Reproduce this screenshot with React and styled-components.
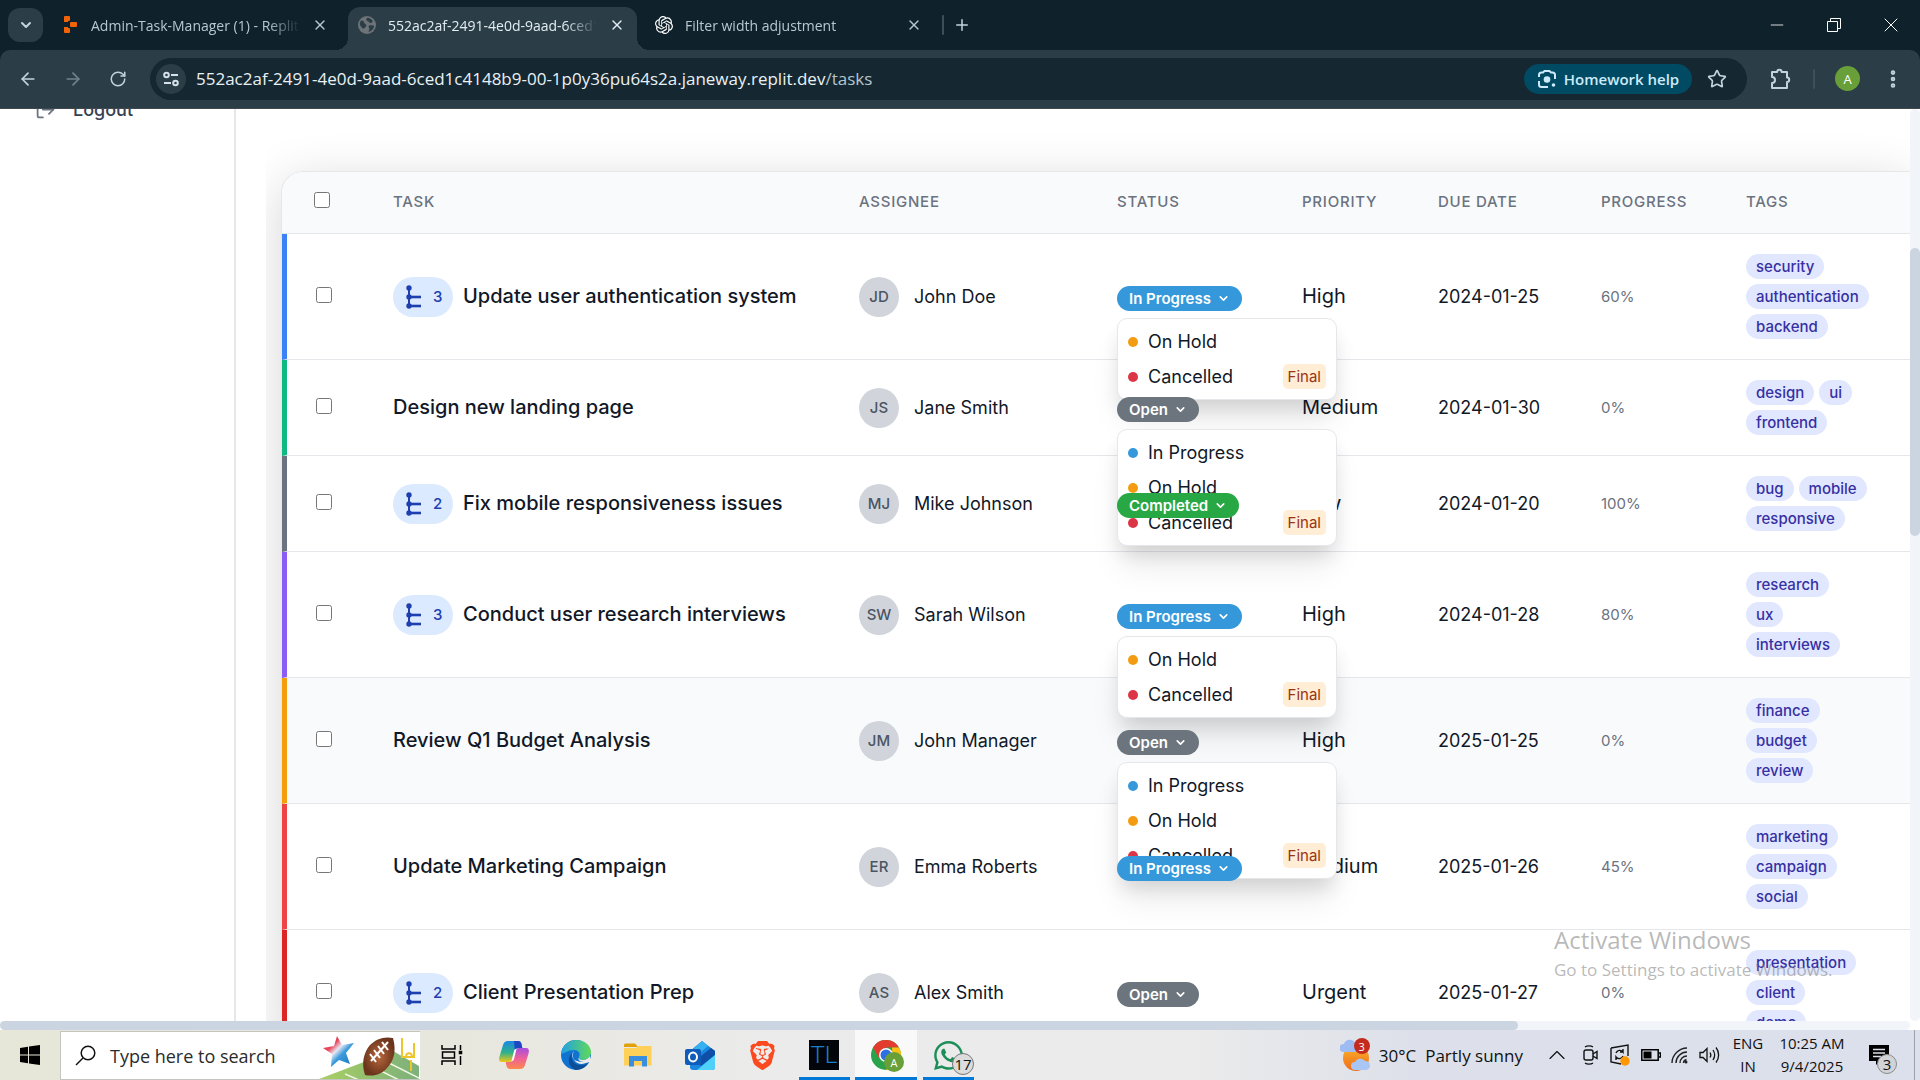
import React from "react";
import styled, { createGlobalStyle } from "styled-components";
import {
  ArrowLeft, ArrowRight, RotateCw, X, Plus, ChevronDown, ChevronUp, LogOut,
  Star, EllipsisVertical, Minus,
} from "lucide-react";
import { SiOpenai, SiBrave } from "react-icons/si";
import { FaWhatsapp } from "react-icons/fa";

const GlobalStyle = createGlobalStyle`
  *, *::before, *::after { box-sizing: border-box; }
  html, body, #root { height: 100%; }
  body { margin: 0; overflow: hidden; font-family: Inter, sans-serif; color: #111827; }
  button { font: inherit; color: inherit; border: 0; padding: 0; background: none; }
  svg { display: block; flex: none; }
`;

const Screen = styled.div`
  display: flex;
  flex-direction: column;
  height: 100vh;
  position: relative;
`;

/* ---------- browser ---------- */
const TabStrip = styled.header`
  display: flex;
  align-items: flex-start;
  height: 50px;
  padding-left: 8px;
  background: #0f222b;
  font-family: "Open Sans", sans-serif;
  color: #c3d3dc;
`;
const TabSearch = styled.button`
  display: grid;
  place-items: center;
  width: 35px;
  height: 34px;
  margin: 8px 8px 0 0;
  border-radius: 12px;
  background: #2b3e47;
`;
const Tab = styled.div`
  position: relative;
  display: flex;
  align-items: center;
  gap: 12px;
  width: 289px;
  height: 43px;
  margin: 7px 8px 0 0;
  padding: 0 12px 7px 10px;
  border-radius: 12px 12px 0 0;
  font-size: 14px;
  color: ${(p) => (p.$active ? "#e3edf2" : "#b6c8d2")};
  background: ${(p) => (p.$active ? "#2b3e47" : "transparent")};
  ${(p) => p.$active && `
    &::before, &::after {
      content: ""; position: absolute; bottom: 0; width: 12px; height: 12px;
    }
    &::before { left: -12px; background: radial-gradient(circle at 0 0, transparent 12px, #2b3e47 12px); }
    &::after { right: -12px; background: radial-gradient(circle at 100% 0, transparent 12px, #2b3e47 12px); }
  `}
`;
const TabTitle = styled.span`
  flex: 1;
  min-width: 0;
  overflow: hidden;
  white-space: nowrap;
  mask-image: linear-gradient(to right, #000 calc(100% - 32px), transparent);
`;
const Plain = styled.button`
  display: grid;
  place-items: center;
  width: ${(p) => p.$w || 16}px;
  height: ${(p) => p.$h || 24}px;
  flex: none;
  color: ${(p) => p.$c || "inherit"};
`;
const StripEnd = styled.div`
  display: flex;
  align-items: center;
  gap: 9px;
  height: 50px;
`;
const Divider = styled.span`
  width: 2px;
  height: 20px;
  border-radius: 1px;
  background: #3b505b;
`;
const WindowButtons = styled.div`
  display: flex;
  align-items: center;
  height: 50px;
  margin-left: auto;
  color: #fff;
`;
const ToolbarBack = styled.div`
  background: #0f222b;
`;
const Toolbar = styled.div`
  display: flex;
  align-items: center;
  height: 59px;
  padding: 0 14px 1px 11px;
  border-radius: 10px 10px 0 0;
  border-bottom: 1px solid #41494f;
  background: #2b3e47;
  color: #c3d3dc;
  font-family: "Open Sans", sans-serif;
`;
const NavButtons = styled.nav`
  display: flex;
  gap: 11px;
  margin-right: 15px;
`;
const AddressBar = styled.div`
  display: flex;
  flex: 1;
  align-items: center;
  height: 42px;
  padding: 0 20px 0 6px;
  border-radius: 21px;
  background: #152831;
`;
const SiteInfo = styled.button`
  display: grid;
  place-items: center;
  width: 30px;
  height: 30px;
  border-radius: 15px;
  background: #2b3e47;
  color: #d5e2e9;
`;
const Url = styled.span`
  flex: 1;
  margin-left: 10px;
  white-space: nowrap;
  font-family: "Open Sans", sans-serif;
  font-size: 17px;
  color: #eaf1f5;
  span { color: #b4c5ce; }
`;
const LensButton = styled.button`
  display: flex;
  align-items: center;
  justify-content: center;
  gap: 7px;
  width: 168px;
  height: 30px;
  margin-right: 15px;
  border-radius: 15px;
  background: #004a63;
  color: #cdeafa;
  font-size: 15px;
  font-weight: 600;
`;
const ToolbarEnd = styled.div`
  display: flex;
  align-items: center;
  margin-left: 20px;
  gap: 20px;
`;
const Profile = styled.button`
  width: 25px;
  height: 25px;
  border-radius: 50%;
  background: #689f38;
  color: #fff;
  font-size: 13px;
`;

/* ---------- page viewport ---------- */
const Viewport = styled.div`
  flex: 1;
  min-height: 0;
  display: grid;
  grid-template-columns: minmax(0, 1fr) 10px;
  grid-template-rows: minmax(0, 1fr) 9px;
  background: #fff;
`;
const Page = styled.div`
  display: grid;
  grid-template-columns: 236px minmax(0, 1fr);
  overflow: hidden;
`;
const VTrack = styled.div`
  padding-top: 139px;
  border-radius: 5px;
  background: #f1f5f9;
`;
const VThumb = styled.div`
  height: 288px;
  border-radius: 5px;
  background: #cbd5e1;
`;
const HTrack = styled.div`
  border-radius: 5px;
  background: #f1f5f9;
`;
const HThumb = styled.div`
  width: 79.5%;
  height: 9px;
  border-radius: 5px;
  background: #cbd5e1;
`;
const Sidebar = styled.aside`
  border-right: 2px solid #e5e7eb;
  overflow: hidden;
`;
const SideLink = styled.a`
  display: flex;
  align-items: center;
  gap: 17px;
  margin-top: -12px;
  padding-left: 35px;
  height: 25px;
  font-size: 18px;
  line-height: 25px;
  font-weight: 500;
  color: #374151;
  text-decoration: none;
  svg { color: #6b7280; }
`;
const Main = styled.main`
  margin-left: 30px;
  padding: 62px 0 0 15px;
  overflow: hidden;
`;
const Card = styled.section`
  border: 1px solid #e5e7eb;
  border-right: 0;
  border-radius: 22px 0 0 0;
  background: #fff;
  box-shadow: 0 10px 50px rgba(0, 0, 0, 0.16);
`;
const Table = styled.table`
  width: 100%;
  table-layout: fixed;
  border-collapse: separate;
  border-spacing: 0;
`;
const Th = styled.th`
  height: 62px;
  padding: 0 0 2px 30px;
  text-align: left;
  font-size: 15px;
  line-height: 20px;
  font-weight: 500;
  letter-spacing: 0.05em;
  color: #6b7280;
  background: #f9fafc;
  border-bottom: 1px solid #e5e7eb;
  &:first-child { border-radius: 21px 0 0 0; padding-left: 32px; }
`;
const Row = styled.tr`
  background: ${(p) => (p.$hover ? "#f9fafc" : "#fff")};
`;
const Td = styled.td`
  padding: 20px 0 20px 30px;
  vertical-align: middle;
  border-bottom: 1px solid #e5e7eb;
  font-size: ${(p) => p.$size || 18}px;
  line-height: 25px;
  color: ${(p) => p.$c || "#111827"};
  white-space: nowrap;
`;
const CheckTd = styled(Td)`
  padding-left: 29px;
  border-left: 5px solid ${(p) => p.$bar};
`;
const Check = styled.input`
  display: block;
  width: 16px;
  height: 16px;
  margin: 0 0 3px;
`;
const TaskCell = styled.div`
  display: flex;
  align-items: center;
  gap: 10px;
  font-size: 20px;
  font-weight: 500;
`;
const SubtaskPill = styled.button`
  display: flex;
  align-items: center;
  gap: 12px;
  width: 60px;
  height: 40px;
  padding-left: 12px;
  border-radius: 20px;
  background: #dbeafe;
  color: #1e40af;
  font-size: 15px;
`;
const Person = styled.div`
  display: flex;
  align-items: center;
  gap: 15px;
`;
const Avatar = styled.span`
  display: grid;
  place-items: center;
  width: 40px;
  height: 40px;
  border-radius: 50%;
  background: #d1d5db;
  color: #4b5563;
  font-size: 15px;
  font-weight: 500;
`;
const StatusWrap = styled.div`
  position: relative;
  width: max-content;
  padding-top: 4px;
`;
const Badge = styled.button`
  display: flex;
  align-items: center;
  gap: 6px;
  height: 25px;
  padding: 0 12px;
  border-radius: 13px;
  background: ${(p) => p.$bg};
  color: #fff;
  font-size: 15px;
  line-height: 25px;
  font-weight: 600;
`;
const Menu = styled.div`
  position: absolute;
  top: calc(100% + 7px);
  left: 0;
  width: 220px;
  padding: 5px 0;
  border: 1px solid #e5e7eb;
  border-radius: 10px;
  background: #fff;
  box-shadow: 0 12px 19px -4px rgba(0, 0, 0, 0.12), 0 25px 32px -4px rgba(0, 0, 0, 0.08);
`;
const MenuItem = styled.button`
  display: flex;
  align-items: center;
  gap: 10px;
  width: 100%;
  height: 35px;
  padding: 0 10px;
  font-size: 18px;
  text-align: left;
  color: #111827;
`;
const Dot = styled.span`
  width: 10px;
  height: 10px;
  border-radius: 50%;
  background: ${(p) => p.$c};
`;
const Final = styled.span`
  margin-left: auto;
  padding: 0 5px;
  border-radius: 5px;
  background: #ffedd5;
  color: #9a3412;
  font-size: 15px;
  line-height: 25px;
`;
const Tags = styled.div`
  display: flex;
  flex-wrap: wrap;
  gap: 5px;
  width: 124px;
`;
const Tag = styled.span`
  padding: 0 10px;
  border-radius: 13px;
  background: #e0e7ff;
  color: #3730a3;
  font-size: 15px;
  line-height: 25px;
  font-weight: 500;
`;

/* ---------- desktop ---------- */
const Watermark = styled.div`
  position: absolute;
  right: 83px;
  bottom: 96px;
  width: 283px;
  font-family: "Open Sans", sans-serif;
  color: rgba(125, 125, 125, 0.55);
  white-space: nowrap;
  pointer-events: none;
  p { margin: 0; font-size: 24px; line-height: 32px; }
  p + p { font-size: 17px; line-height: 28px; }
`;
const Taskbar = styled.footer`
  display: flex;
  align-items: stretch;
  height: 50px;
  background: linear-gradient(to right, #e6e7d8 0, #e8e7de 24%, #ebebeb 40%, #ebebeb 62%, #dde0ea 74%, #dbe0ec 100%);
  font-family: "Open Sans", sans-serif;
  color: #111;
`;
const StartButton = styled.button`
  display: grid;
  place-items: center;
  width: 60px;
`;
const SearchBox = styled.label`
  display: flex;
  align-items: center;
  width: 360px;
  margin-top: 1px;
  padding-left: 14px;
  border: 1px solid #c4c4c0;
  border-right: 0;
  background: #fff;
  input {
    width: 209px;
    margin-left: 14px;
    padding: 0;
    border: 0;
    outline: 0;
    font: 18px "Open Sans", sans-serif;
    background: none;
  }
  input::placeholder { color: #2b2b2b; opacity: 1; }
`;
const Apps = styled.div`
  display: flex;
  align-items: stretch;
  margin-left: 1px;
`;
const TaskButton = styled.button`
  display: grid;
  place-items: center;
  width: 62px;
  position: relative;
  background: ${(p) => (p.$active ? "#f9f9f9" : "transparent")};
  &::after {
    content: "";
    position: absolute;
    bottom: 0;
    left: ${(p) => (p.$active ? 0 : 6)}px;
    right: ${(p) => (p.$active ? 0 : 5)}px;
    height: 3px;
    background: ${(p) => (p.$open ? "#0078d7" : "transparent")};
  }
`;
const TlTile = styled.span`
  display: grid;
  place-items: center;
  width: 30px;
  height: 30px;
  background: #02060a;
  color: #1b7fd0;
  font-family: Roboto, sans-serif;
  font-weight: 300;
  font-size: 24px;
  line-height: 30px;
`;
const CountBadge = styled.span`
  position: absolute;
  left: ${(p) => p.$x}px;
  top: ${(p) => p.$y}px;
  display: grid;
  place-items: center;
  width: ${(p) => p.$s}px;
  height: ${(p) => p.$s}px;
  border: ${(p) => (p.$line ? `1px solid ${p.$line}` : 0)};
  border-radius: 50%;
  background: ${(p) => p.$bg};
  color: ${(p) => p.$c || "#111"};
  font-size: ${(p) => p.$f || 15}px;
  line-height: 1;
`;
const Tray = styled.div`
  display: flex;
  align-items: center;
  margin-left: auto;
`;
const Weather = styled.button`
  display: flex;
  align-items: center;
  gap: 9px;
  margin-right: 20px;
  font-size: 17px;
`;
const IconSlot = styled.span`
  position: relative;
  display: inline-grid;
`;
const TrayIcons = styled.div`
  display: flex;
  align-items: center;
  gap: 10px;
  margin-right: 8px;
`;
const Stacked = styled.div`
  width: ${(p) => p.$w}px;
  text-align: center;
  font-size: 15px;
  line-height: 23px;
  white-space: nowrap;
`;
const Notice = styled.button`
  position: relative;
  width: 26px;
  height: 26px;
  margin: 0 19px 0 13px;
`;
const ShowDesktop = styled.button`
  width: 6px;
  align-self: stretch;
  border-left: 1px solid #9da1a8;
`;

/* ---------- data ---------- */
const statusColor = {
  "In Progress": "#3498db",
  Open: "#6c757d",
  Completed: "#28a745",
  "On Hold": "#f39c12",
  Cancelled: "#dc3545",
};
const tasks = [
  { bar: "#3b82f6", subs: 3, title: "Update user authentication system", who: "John Doe", ini: "JD", status: "In Progress", next: ["On Hold", "Cancelled"], priority: "High", due: "2024-01-25", progress: "60%", tags: ["security", "authentication", "backend"] },
  { bar: "#10b981", title: "Design new landing page", who: "Jane Smith", ini: "JS", status: "Open", next: ["In Progress", "On Hold", "Cancelled"], priority: "Medium", due: "2024-01-30", progress: "0%", tags: ["design", "ui", "frontend"] },
  { bar: "#6b7280", subs: 2, title: "Fix mobile responsiveness issues", who: "Mike Johnson", ini: "MJ", status: "Completed", priority: "Low", due: "2024-01-20", progress: "100%", tags: ["bug", "mobile", "responsive"] },
  { bar: "#8b5cf6", subs: 3, title: "Conduct user research interviews", who: "Sarah Wilson", ini: "SW", status: "In Progress", next: ["On Hold", "Cancelled"], priority: "High", due: "2024-01-28", progress: "80%", tags: ["research", "ux", "interviews"] },
  { bar: "#f59e0b", hover: true, title: "Review Q1 Budget Analysis", who: "John Manager", ini: "JM", status: "Open", next: ["In Progress", "On Hold", "Cancelled"], priority: "High", due: "2025-01-25", progress: "0%", tags: ["finance", "budget", "review"] },
  { bar: "#ef4444", title: "Update Marketing Campaign", who: "Emma Roberts", ini: "ER", status: "In Progress", priority: "Medium", due: "2025-01-26", progress: "45%", tags: ["marketing", "campaign", "social"] },
  { bar: "#dc2626", subs: 2, title: "Client Presentation Prep", who: "Alex Smith", ini: "AS", status: "Open", priority: "Urgent", due: "2025-01-27", progress: "0%", tags: ["presentation", "client", "demo"] },
];

/* ---------- drawings ---------- */
const ReplitIcon = () => (
  <svg width="18" height="18" viewBox="0 0 18 18" fill="#f26207">
    <rect x="3" y="0" width="6" height="5" rx="1" />
    <rect x="9" y="6" width="7" height="5" rx="1" />
    <rect x="3" y="12" width="6" height="5" rx="1" />
    <rect x="3" y="4" width="4" height="2" /><rect x="3" y="11" width="4" height="2" />
  </svg>
);
const GlobeIcon = () => (
  <svg width="18" height="18" viewBox="0 0 18 18">
    <circle cx="9" cy="9" r="9" fill="#6d7377" />
    <path d="M3 4.500c2-.2 3 .6 3 2s2.400 1.200 2.400 3-2 1.500-2.400 3.500C3.500 12 1.600 9.500 1.800 7zM9 1.800c2.500 0 5 1.500 6 3.600-1.400.2-1 1.600-2.600 1.600S11 5 9.500 5 8.200 3 9 1.800zM11 9.500c2-.4 4.500 0 5.200.6-.6 3-3 5.500-5.700 6 .3-1.600 1-2 .8-3.500s-1.300-2-.3-3.100z" fill="#2b3e47" />
  </svg>
);
const TuneIcon = () => (
  <svg width="18" height="18" viewBox="0 0 18 18" fill="none" stroke="currentColor" strokeWidth="2">
    <circle cx="4.500" cy="5" r="2.300" /><path d="M9 5h7M2 13h7" /><circle cx="13.500" cy="13" r="2.300" />
  </svg>
);
const LensIcon = () => (
  <svg width="20" height="20" viewBox="0 0 20 20" fill="none" stroke="currentColor" strokeWidth="2">
    <path d="M2 8V6a2.500 2.500 0 0 1 2.500-2.500H6L7.500 2h5L14 3.500h1.500A2.500 2.500 0 0 1 18 6v4M2 12v3.500A2.500 2.500 0 0 0 4.500 18H11" />
    <circle cx="10" cy="10.500" r="3.300" fill="currentColor" stroke="none" />
    <circle cx="16.500" cy="16" r="1.800" fill="currentColor" stroke="none" />
  </svg>
);
const PuzzleIcon = () => (
  <svg width="24" height="24" viewBox="0 0 24 24" fill="none" stroke="currentColor" strokeWidth="2" strokeLinejoin="round">
    <path d="M4 5h5.200a2.200 2.200 0 0 1 4.400 0H19v5.500a2.200 2.200 0 0 1 0 4.400V21H4v-5a3 3 0 0 0 0-6z" />
  </svg>
);
const RestoreIcon = () => (
  <svg width="14" height="14" viewBox="0 0 14 14" fill="none" stroke="currentColor">
    <path d="M.5 3.500h10v10H.5zM3.500 3V.5h10v10H11" />
  </svg>
);
const TreeIcon = () => (
  <svg width="16" height="24" viewBox="0 0 16 24" fill="#1e40af">
    <circle cx="4" cy="3" r="2.700" /><circle cx="4" cy="12" r="2.700" /><circle cx="4" cy="21" r="2.700" />
    <rect x="3" y="3" width="2" height="18" /><rect x="4" y="10.700" width="12" height="2.600" /><rect x="4" y="19.700" width="12" height="2.600" />
  </svg>
);
const WindowsIcon = () => (
  <svg width="20" height="20" viewBox="0 0 20 20" fill="#000">
    <path d="M0 3l8-1.200v7.700H0zM9 1.600L20 0v9.500H9zM0 10.500h8v7.700L0 17zM9 10.500h11V20L9 18.400z" />
  </svg>
);
const SearchIcon = () => (
  <svg width="21" height="21" viewBox="0 0 21 21" fill="none" stroke="#111" strokeWidth="1.500">
    <circle cx="13" cy="8" r="6.800" /><path d="M8 13l-7 7" />
  </svg>
);
const FootballArt = () => (
  <svg width="100" height="47" viewBox="0 0 100 47">
    <defs>
      <linearGradient id="field" x1="0" x2="1"><stop offset="0" stopColor="#a9cf62" /><stop offset="1" stopColor="#7db07c" /></linearGradient>
      <linearGradient id="star" x1="0" y1="0" x2="1" y2="1"><stop offset=".3" stopColor="#e84457" /><stop offset=".45" stopColor="#e8e6f4" /><stop offset=".6" stopColor="#3a9bdc" /><stop offset="1" stopColor="#1b6fb8" /></linearGradient>
      <radialGradient id="ball"><stop offset="0" stopColor="#b9683c" /><stop offset="1" stopColor="#6b351d" /></radialGradient>
    </defs>
    <path d="M0 47L74 19l26 15v13z" fill="url(#field)" />
    <path d="M26 42l14 6M56 36l24 12M66 29l34 17" stroke="#eef6e2" strokeWidth="1.500" />
    <path d="M18 4l5 9 12-2-8 10 4 11-11-4-8 7 1-13L4 16l11-2z" fill="url(#star)" />
    <path d="M74 6c4 14 0 24-6 30-5 6-13 9-22 7-4-12-1-23 5-30 6-6 14-9 23-7z" fill="url(#ball)" />
    <path d="M52 29L69 10M51 22l6 8M55 18l6 8M59 14l6 8M63 10l6 8" stroke="#fff" strokeWidth="2" />
    <path d="M83 6v19h12V11M92 39V28M87 25c0-5 6-5 6 0" stroke="#edc62c" strokeWidth="2" fill="none" />
  </svg>
);
const TaskViewIcon = () => (
  <svg width="22" height="20" viewBox="0 0 22 20" fill="none" stroke="#000" strokeWidth="1.500">
    <path d="M1 0v4h13V0M1 20v-4h13v4M1.500 7h12v6h-12zM19.500 0v5M19.500 11v9" /><rect x="18.500" y="6.500" width="2" height="2" fill="#000" />
  </svg>
);
const CopilotIcon = () => (
  <svg width="30" height="28" viewBox="0 0 30 28">
    <defs>
      <linearGradient id="cpA" x1="0" y1="0" x2="0" y2="1"><stop offset="0" stopColor="#1a86e8" /><stop offset=".55" stopColor="#2fb18b" /><stop offset="1" stopColor="#f3c614" /></linearGradient>
      <linearGradient id="cpB" x1="0" y1="0" x2="0" y2="1"><stop offset="0" stopColor="#a64ee0" /><stop offset=".5" stopColor="#f0609a" /><stop offset="1" stopColor="#fb8a4a" /></linearGradient>
    </defs>
    <path d="M9 0h10c2 0 3 1 3.500 3l.8 4h-4c-2 0-3 1-3.500 3l-2 8c-.7 2-1.600 3-4 3H3C0 21-.3 18.500.5 15.500L4 4c.8-2.500 2.300-4 5-4z" fill="url(#cpA)" />
    <path d="M15 0h4c2 0 3 1 3.500 3l.8 4h-4c-2 0-3 1-3.500 3z" fill="#1e47c4" />
    <path d="M21 28H11c-2 0-3-1-3.500-3l-.8-4h4c2 0 3-1 3.500-3l2-8c.7-2 1.600-3 4-3H27c3 0 3.300 2.500 2.500 5.500L26 24c-.8 2.500-2.300 4-5 4z" fill="url(#cpB)" />
    <path d="M12.500 20L15 10c.4-1.500 1-2 2.500-2L15 18c-.4 1.500-1 2-2.500 2z" fill="#fff" />
  </svg>
);
const EdgeIcon = () => (
  <svg width="30" height="30" viewBox="0 0 30 30">
    <defs>
      <linearGradient id="edA" x1="0" x2="1"><stop offset="0" stopColor="#229fe6" /><stop offset="1" stopColor="#5fd95a" /></linearGradient>
    </defs>
    <circle cx="15" cy="15" r="15" fill="#1173d0" />
    <path d="M0 14C1 5 8 0 15 0c9 0 15 6 15 12 0 5-4 8-8 8-3 0-5-1-4-3 2-4-1-7-5-7-6 0-9 3-13 4z" fill="url(#edA)" />
    <path d="M11 13c-2 7 3 13 10 12 3 0 5-1 7-3-3 5-8 8-13 8-7-2-10-11-4-17z" fill="#0c4f98" />
    <path d="M13 11c-3 3-2 9 3 10 5 2 9 1 13-2l1 0-1 3-8 2c-8 0-11-8-8-13z" fill="#ebebeb" />
    <path d="M18 17c-1 2 1 3 4 3 3 0 6-2 7-4l1 4-5 2c-5 0-9-1-7-5z" fill="#ebebeb" />
  </svg>
);
const ExplorerIcon = () => (
  <svg width="28" height="24" viewBox="0 0 28 24">
    <path d="M0 2a1.500 1.500 0 0 1 1.500-1.500H11L14 4H0z" fill="#e0a10a" />
    <path d="M0 5h12l2-2h13.500v19.500H0z" fill="#ffd058" />
    <path d="M5 23.500V13h18v10.500h-5V18h-8v5.500z" fill="#3b8ede" />
  </svg>
);
const OutlookIcon = () => (
  <svg width="30" height="30" viewBox="0 0 30 30">
    <path d="M5 11L17 1l13 10v16a3 3 0 0 1-3 3H8a3 3 0 0 1-3-3z" fill="#1b86de" />
    <path d="M5 12L17 1l6 5L9 18z" fill="#35b0f0" /><path d="M11 20L26 8l4 3v4L16 26z" fill="#0f4fa8" />
    <path d="M12 30L30 15v12a3 3 0 0 1-3 3z" fill="#4fd0fb" />
    <rect x="0" y="9" width="16" height="16" rx="2" fill="#0f5cba" />
    <ellipse cx="8" cy="17" rx="4" ry="4.500" fill="none" stroke="#fff" strokeWidth="2" />
  </svg>
);
const ChromeIcon = () => (
  <svg width="30" height="30" viewBox="0 0 30 30">
    <circle cx="15" cy="15" r="15" fill="#2ba24c" />
    <path d="M15 15L2 7.500A15 15 0 0 1 28 7.500H15z" fill="#e33b2e" />
    <path d="M28 7.500A15 15 0 0 1 15 30l6.500-11.300L21 7.500z" fill="#fbc116" />
    <path d="M2 7.500L8.500 18.700 15 8z" fill="#e33b2e" />
    <circle cx="15" cy="15" r="7" fill="#fff" /><circle cx="15" cy="15" r="5.500" fill="#2f6fe4" />
  </svg>
);
const WeatherIcon = () => (
  <svg width="30" height="34" viewBox="0 0 30 34">
    <defs><linearGradient id="sun" x1="0" y1="0" x2="0" y2="1"><stop offset="0" stopColor="#fbb32c" /><stop offset="1" stopColor="#ef6c1a" /></linearGradient></defs>
    <circle cx="16" cy="20" r="13" fill="url(#sun)" />
    <path d="M3 14a4 4 0 0 1 1-8 6 6 0 0 1 11-1 4.500 4.500 0 0 1 2 9z" fill="#9dbdf2" />
    <path d="M15 32a4 4 0 0 1 0-8 6 6 0 0 1 10-1 4.500 4.500 0 0 1 1 9z" fill="#a9c6f4" />
  </svg>
);
const MeetIcon = () => (
  <svg width="18" height="20" viewBox="0 0 18 20" fill="none" stroke="#111" strokeWidth="1.400">
    <rect x="3" y="5" width="9" height="10" rx="2" /><path d="M12 9l4-2.500v7L12 11M4 2c2-1.500 6-1.500 8 0M4 18c2 1.500 6 1.500 8 0" />
  </svg>
);
const UpdateIcon = () => (
  <svg width="22" height="22" viewBox="0 0 22 22" fill="none" stroke="#111" strokeWidth="1.400">
    <path d="M2 4l17-3v11M2 4v14l10 2M7 9a4 4 0 0 1 7-1V5M14 8h-3M14 12a4 4 0 0 1-7 1v3" />
    <circle cx="16" cy="17" r="4.700" fill="#ff9800" stroke="none" />
  </svg>
);
const BatteryIcon = () => (
  <svg width="20" height="12" viewBox="0 0 20 12"><path d="M.8.800h16.400v10.400H.8zM18 4h1.500v4H18" fill="none" stroke="#000" strokeWidth="1.500" /><path d="M2.500 2.500h8v7h-8z" /></svg>
);
const WifiIcon = () => (
  <svg width="18" height="17" viewBox="0 0 18 17" fill="none" stroke="#222" strokeWidth="1.400">
    <path d="M1 16C1 8 8 1 16 1M5 16C5 10 10 5 16 5M9 16c0-4 3-7 7-7M12.500 16c0-2 1.500-3 3-3.500" /><circle cx="15" cy="15" r="1.500" fill="#222" stroke="none" />
  </svg>
);
const SoundIcon = () => (
  <svg width="21" height="18" viewBox="0 0 21 18" fill="none" stroke="#111" strokeWidth="1.300">
    <path d="M1 6.500h3l4-4v13l-4-4H1zM11 6.500c1 1.500 1 3.500 0 5M14 4c2 3 2 7 0 10M17 1.500c3.500 4.500 3.500 10.500 0 15" />
  </svg>
);
const NoticeIcon = () => (
  <svg width="21" height="21" viewBox="0 0 21 21"><path d="M0 0h20v16h-9l-4 4v-4H0z" /><path d="M4 4.500h12M4 8h12M4 11.500h8" stroke="#dbe0ec" strokeWidth="1.300" /></svg>
);

function BrowserTab({ icon, title, active }) {
  return (
    <Tab $active={active}>
      {icon}
      <TabTitle>{title}</TabTitle>
      <Plain aria-label="Close tab"><X size={16} strokeWidth={2} /></Plain>
    </Tab>
  );
}

function Status({ value, next }) {
  return (
    <StatusWrap>
      <Badge $bg={statusColor[value]}>{value}<ChevronDown size={13} strokeWidth={3} /></Badge>
      {next && (
        <Menu>
          {next.map((s) => (
            <MenuItem key={s}><Dot $c={statusColor[s]} />{s}{s === "Cancelled" && <Final>Final</Final>}</MenuItem>
          ))}
        </Menu>
      )}
    </StatusWrap>
  );
}

export default function App() {
  return (
    <Screen>
      <GlobalStyle />
      <TabStrip>
        <TabSearch aria-label="Search tabs"><ChevronDown size={16} strokeWidth={3} /></TabSearch>
        <BrowserTab icon={<ReplitIcon />} title="Admin-Task-Manager (1) - Replit" />
        <BrowserTab active icon={<GlobeIcon />} title="552ac2af-2491-4e0d-9aad-6ced1c4148b9" />
        <BrowserTab icon={<SiOpenai size={18} color="#fff" />} title="Filter width adjustment" />
        <StripEnd>
          <Divider />
          <Plain aria-label="New tab"><Plus size={18} /></Plain>
        </StripEnd>
        <WindowButtons>
          <Plain $w={56} $h={50} aria-label="Minimize"><Minus size={20} strokeWidth={1} /></Plain>
          <Plain $w={57} $h={50} aria-label="Restore"><RestoreIcon /></Plain>
          <Plain $w={58} $h={50} aria-label="Close"><X size={24} strokeWidth={1} /></Plain>
        </WindowButtons>
      </TabStrip>
      <ToolbarBack>
        <Toolbar>
          <NavButtons>
            <Plain $w={34} aria-label="Back"><ArrowLeft size={20} /></Plain>
            <Plain $w={34} $c="#71848e" aria-label="Forward"><ArrowRight size={20} /></Plain>
            <Plain $w={34} aria-label="Reload"><RotateCw size={18} /></Plain>
          </NavButtons>
          <AddressBar>
            <SiteInfo aria-label="Site information"><TuneIcon /></SiteInfo>
            <Url>552ac2af-2491-4e0d-9aad-6ced1c4148b9-00-1p0y36pu64s2a.janeway.replit.dev<span>/tasks</span></Url>
            <LensButton><LensIcon />Homework help</LensButton>
            <Plain $w={20} aria-label="Bookmark"><Star size={20} /></Plain>
          </AddressBar>
          <ToolbarEnd>
            <Plain $w={26} aria-label="Extensions"><PuzzleIcon /></Plain>
            <Divider />
            <Profile>A</Profile>
            <Plain $w={26} aria-label="Menu"><EllipsisVertical size={22} strokeWidth={3} /></Plain>
          </ToolbarEnd>
        </Toolbar>
      </ToolbarBack>

      <Viewport>
        <Page>
          <Sidebar>
            <SideLink href="#logout"><LogOut size={21} />Logout</SideLink>
          </Sidebar>
          <Main>
            <Card>
              <Table>
                <colgroup>
                  <col width="81" /><col width="466" /><col width="258" /><col width="185" />
                  <col width="136" /><col width="163" /><col width="145" /><col />
                </colgroup>
                <thead>
                  <tr>
                    <Th><Check type="checkbox" aria-label="Select all tasks" /></Th>
                    <Th>TASK</Th><Th>ASSIGNEE</Th><Th>STATUS</Th><Th>PRIORITY</Th>
                    <Th>DUE DATE</Th><Th>PROGRESS</Th><Th>TAGS</Th>
                  </tr>
                </thead>
                <tbody>
                  {tasks.map((t) => (
                    <Row key={t.title} $hover={t.hover}>
                      <CheckTd $bar={t.bar}><Check type="checkbox" aria-label={t.title} /></CheckTd>
                      <Td>
                        <TaskCell>
                          {t.subs && <SubtaskPill><TreeIcon />{t.subs}</SubtaskPill>}
                          {t.title}
                        </TaskCell>
                      </Td>
                      <Td><Person><Avatar>{t.ini}</Avatar>{t.who}</Person></Td>
                      <Td><Status value={t.status} next={t.next} /></Td>
                      <Td $size={20}>{t.priority}</Td>
                      <Td>{t.due}</Td>
                      <Td $size={15} $c="#6b7280">{t.progress}</Td>
                      <Td><Tags>{t.tags.map((g) => <Tag key={g}>{g}</Tag>)}</Tags></Td>
                    </Row>
                  ))}
                </tbody>
              </Table>
            </Card>
          </Main>
        </Page>
        <VTrack><VThumb /></VTrack>
        <HTrack><HThumb /></HTrack>
      </Viewport>

      <Taskbar>
        <StartButton aria-label="Start"><WindowsIcon /></StartButton>
        <SearchBox>
          <SearchIcon />
          <input type="text" placeholder="Type here to search" aria-label="Search" />
          <FootballArt />
        </SearchBox>
        <Apps>
          <TaskButton aria-label="Task view"><TaskViewIcon /></TaskButton>
          <TaskButton aria-label="Copilot"><CopilotIcon /></TaskButton>
          <TaskButton aria-label="Edge"><EdgeIcon /></TaskButton>
          <TaskButton aria-label="File Explorer"><ExplorerIcon /></TaskButton>
          <TaskButton aria-label="Outlook"><OutlookIcon /></TaskButton>
          <TaskButton aria-label="Brave"><SiBrave size={29} color="#fb4a20" /></TaskButton>
          <TaskButton $open><TlTile>TL</TlTile></TaskButton>
          <TaskButton $open $active aria-label="Chrome">
            <ChromeIcon /><CountBadge $x={29} $y={22} $s={20} $f={11} $bg="#689f38" $c="#fff">A</CountBadge>
          </TaskButton>
          <TaskButton $open aria-label="WhatsApp">
            <FaWhatsapp size={33} color="#1c8f59" /><CountBadge $x={35} $y={23} $s={22} $line="#777" $bg="#dcdcdc">17</CountBadge>
          </TaskButton>
        </Apps>
        <Tray>
          <Weather>
            <IconSlot><WeatherIcon /><CountBadge $x={14} $y={0} $s={16} $f={11} $bg="#c42b1c" $c="#fff">3</CountBadge></IconSlot>
            <span>30°C</span><span>Partly sunny</span>
          </Weather>
          <TrayIcons>
            <ChevronUp size={28} strokeWidth={1} />
            <MeetIcon /><UpdateIcon /><BatteryIcon /><WifiIcon /><SoundIcon />
          </TrayIcons>
          <Stacked $w={40}>ENG<br />IN</Stacked>
          <Stacked $w={88}>10:25 AM<br />9/4/2025</Stacked>
          <Notice aria-label="Notifications">
            <NoticeIcon /><CountBadge $x={8} $y={12} $s={20} $line="#8a8a8a" $bg="#d2d3d6">3</CountBadge>
          </Notice>
          <ShowDesktop aria-label="Show desktop" />
        </Tray>
      </Taskbar>
      <Watermark><p>Activate Windows</p><p>Go to Settings to activate Windows.</p></Watermark>
    </Screen>
  );
}
